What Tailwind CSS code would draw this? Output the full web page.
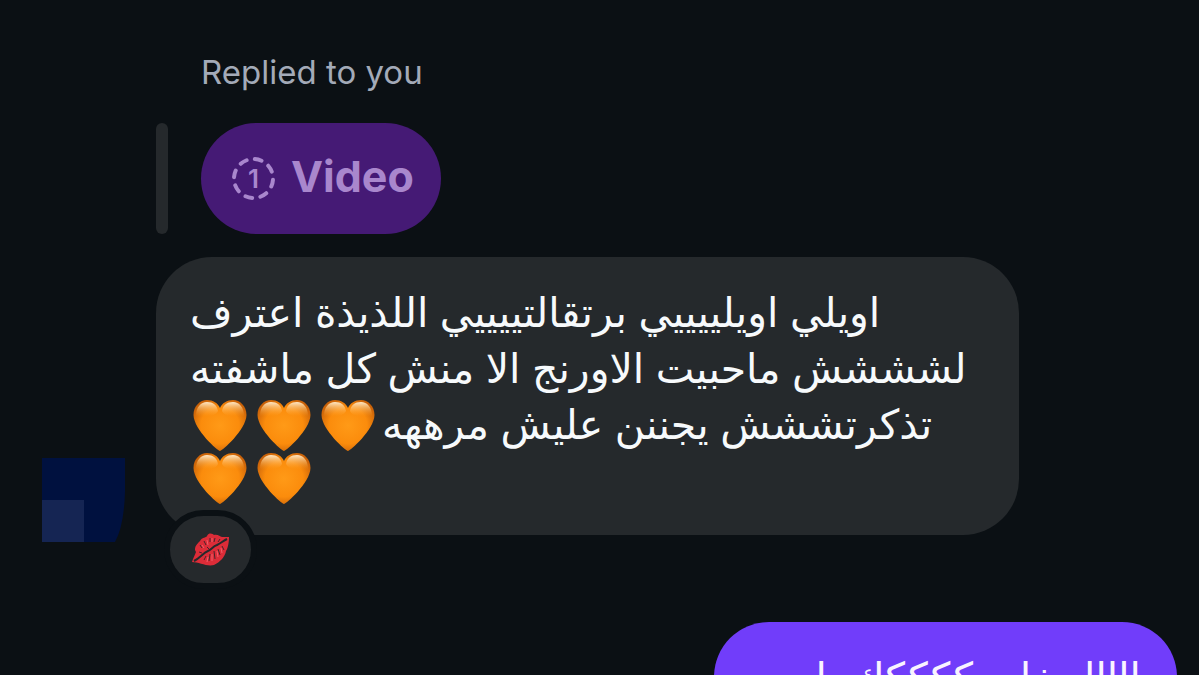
<!DOCTYPE html>
<html lang="ar">

<head>
	<meta charset="UTF-8">
	<meta name="viewport" content="width=device-width, initial-scale=1.0">
	<title>Chat</title>
	<script src="https://cdn.jsdelivr.net/npm/@tailwindcss/browser@4"></script>
</head>

<body class="h-screen overflow-hidden bg-[#0b1014] font-['Inter','DejaVu_Sans',sans-serif]">
	<!-- Shared emoji shapes -->
	<svg class="absolute size-0" aria-hidden="true">
		<defs>
			<radialGradient id="heart-fill" cx="50%" cy="50%" r="60%">
				<stop offset="0" stop-color="#ff9a17" />
				<stop offset="0.6" stop-color="#fb8c0c" />
				<stop offset="1" stop-color="#c25c08" />
			</radialGradient>
			<linearGradient id="heart-shine" x1="0" y1="0" x2="0" y2="1">
				<stop offset="0" stop-color="#ffe9c8" />
				<stop offset="1" stop-color="#ffa52e" stop-opacity="0" />
			</linearGradient>
			<symbol id="heart" viewBox="0 0 64 53">
				<path fill="url(#heart-fill)" d="M30 52C28 52 4 31 3.500 16C3.500 7 10 1 17 1C23 1 28 4 30 9C32 4 37 1 43 1C50 1 56.500 7 56.500 16C56 31 32 52 30 52Z" />
				<path fill="url(#heart-shine)" d="M6 17C6 8 11 3 17 3C23 3 27 6 28 12C25 19 12 17 6 17Z" />
				<path fill="url(#heart-shine)" d="M54 17C54 8 49 3 43 3C37 3 33 6 32 12C35 19 48 17 54 17Z" />
			</symbol>
		</defs>
	</svg>

	<main class="flex flex-col pt-[52px]">
		<!-- Replied message -->
		<section class="pl-[156px]">
			<p class="pl-[45px] text-[33px] leading-[40px] text-[#a3aab8]">Replied to you</p>
			<div class="mt-[31px] flex gap-[33px]">
				<div class="w-[12px] rounded-full bg-[#25292c]"></div>
				<button type="button" class="flex h-[111px] items-center gap-[15px] rounded-full bg-[#451a75] pr-[27px] pl-[30px] text-[#a987cd]">
					<span class="grid size-[45px] place-items-center">
						<svg class="col-start-1 row-start-1 size-[45px]" viewBox="0 0 45 45" fill="none" stroke="currentColor" stroke-width="4" stroke-linecap="round" aria-hidden="true">
							<circle cx="22.500" cy="22.500" r="19.500" pathLength="80" stroke-dasharray="4.500 5.500" stroke-dashoffset="-0.900" />
						</svg>
						<span class="col-start-1 row-start-1 text-[26px] leading-[32px] font-semibold">1</span>
					</span>
					<span class="pb-[6px] text-[43px] leading-[52px] font-bold">Video</span>
				</button>
			</div>
		</section>

		<!-- Received message -->
		<section class="mt-[23px] flex items-end">
			<div class="w-[156px] shrink-0 pb-[47px] pl-[42px]">
				<svg class="h-[84px] w-[84px]" viewBox="0 0 84 84" role="img" aria-label="Avatar">
					<path fill="#00113f" d="M0 0H83V34Q82 68 73 84H0Z" />
					<path fill="#152553" d="M0 42H42V84H0Z" />
				</svg>
			</div>
			<div class="flex w-[72%] flex-col items-start">
				<div dir="rtl" class="w-full rounded-[56px] bg-[#25292c] px-[34px] pt-[27px] pb-[33px] text-left text-[41px] leading-[56px] whitespace-nowrap text-[#f7fafc]">
					<p>اويلي اويلييييي برتقالتييييي اللذيذة اعترف</p>
					<p>لشششش ماحبيت الاورنج الا منش كل ماشفته</p>
					<div class="flex h-[53px] items-start justify-end pt-[3px]">
						<p class="leading-[50px]">تذكرتششش يجننن عليش مرههه</p>
						<svg class="h-[53px] w-[64px]" role="img" aria-label="🧡"><use href="#heart" /></svg>
						<svg class="h-[53px] w-[64px]" role="img" aria-label="🧡"><use href="#heart" /></svg>
						<svg class="h-[53px] w-[64px]" role="img" aria-label="🧡"><use href="#heart" /></svg>
					</div>
					<div class="flex h-[53px] items-start justify-end pt-[3px]">
						<svg class="h-[53px] w-[64px]" role="img" aria-label="🧡"><use href="#heart" /></svg>
						<svg class="h-[53px] w-[64px]" role="img" aria-label="🧡"><use href="#heart" /></svg>
					</div>
				</div>
				<!-- Reaction -->
				<button type="button" aria-label="Reaction" class="-mt-[25px] ml-[8px] flex h-[79px] w-[93px] items-center justify-center rounded-[40px] border-6 border-[#0b1014] bg-[#25292c]">
					<svg class="h-[33px] w-[37px]" viewBox="0 0 37 33" aria-hidden="true">
						<path fill="#dc2c38" d="M0 29C1 25 3 22 4 19C1 15 5 11 8 8C10 4 14 5 15 3C17 -1 21 1 22 2C26 1 28 4 30 4L37 4C37 9 36 15 34 18C33 24 28 29 22 32C15 34 7 29 0 29Z" />
						<path fill="none" stroke="#25292c" stroke-width="2" d="M2 28C8 25 11 20 16 18C19 17 21 13 25 12C29 10 31 8 35 6" />
						<path fill="none" stroke="#46252b" stroke-width="1" d="M8 12L10 15M12 8L14 12M18 5L18 9M23 5L22 9M28 6L26 9M7 19L10 20M14 23L12 27M18 21L17 28M22 18L23 26M26 16L28 22M30 13L32 17M15 14L17 16" />
						<path fill="none" stroke="#f0606a" stroke-width="1" d="M10 12L12 15M15 7L16 12M20 5L20 9M16 24L15 29M20 21L20 28M25 18L26 24M29 15L30 20" />
					</svg>
				</button>
			</div>
		</section>

		<!-- Sent message -->
		<section class="mt-[33px] flex justify-end pr-[22px]">
			<div dir="rtl" class="w-[463px] rounded-[56px] bg-[#713dfa] px-[36px] py-[27px] text-[41px] leading-[56px] whitespace-nowrap text-[#f9f3ff]">
				<p>اااااحخلي ككككك يا</p>
			</div>
		</section>
	</main>
</body>

</html>
